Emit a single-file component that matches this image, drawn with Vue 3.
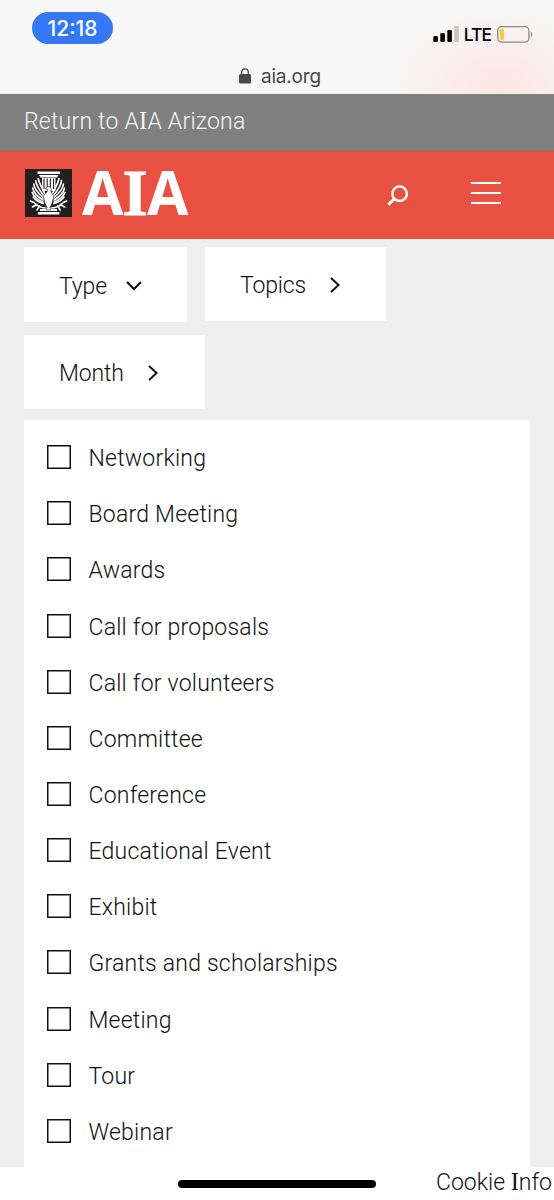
<script setup>
import { ref } from 'vue'

const filters = ref([
  { name: 'Type', open: true },
  { name: 'Topics', open: false },
  { name: 'Month', open: false },
])

const types = ref([
  { label: 'Networking', checked: false },
  { label: 'Board Meeting', checked: false },
  { label: 'Awards', checked: false },
  { label: 'Call for proposals', checked: false },
  { label: 'Call for volunteers', checked: false },
  { label: 'Committee', checked: false },
  { label: 'Conference', checked: false },
  { label: 'Educational Event', checked: false },
  { label: 'Exhibit', checked: false },
  { label: 'Grants and scholarships', checked: false },
  { label: 'Meeting', checked: false },
  { label: 'Tour', checked: false },
  { label: 'Webinar', checked: false },
])
</script>

<template>
  <div class="screen">
    <div class="browser">
      <div class="status">
        <div class="time">12:18</div>
        <div class="signal">
          <svg width="26" height="16" viewBox="0 0 26 16">
            <rect x="0.3" y="10" width="4.6" height="6" rx="1" />
            <rect x="7.3" y="7" width="4.6" height="9" rx="1" />
            <rect x="14.3" y="4" width="4.6" height="12" rx="1" />
            <rect x="21.2" y="0" width="4.6" height="16" rx="1" fill="#cbc3c3" />
          </svg>
          <span class="network">LTE</span>
          <svg width="36" height="17" viewBox="0 0 36 17">
            <rect x="0.7" y="0.7" width="31.2" height="15.4" rx="4" fill="none" stroke="#928587" stroke-width="1.3" />
            <rect x="2.8" y="2.8" width="4.2" height="11.2" rx="1.6" fill="#f3cb45" />
            <path d="M33.8 5.6 Q37 8.4 33.8 11.2 Z" fill="#928587" />
          </svg>
        </div>
      </div>
      <div class="address">
        <svg width="12" height="16" viewBox="0 0 12 16">
          <path d="M2.7 7 V4.5 C2.7 -0.3 9.3 -0.3 9.3 4.5 V7" fill="none" stroke="#484848" stroke-width="1.3" />
          <rect x="0" y="6" width="12" height="9.6" rx="1.6" fill="#484848" />
        </svg>
        <span>aia.org</span>
      </div>
    </div>

    <a class="return">Return to A<span class="slab">I</span>A Arizona</a>

    <header class="header">
      <svg class="emblem" width="47" height="48" viewBox="0 0 47 48">
        <rect width="47" height="48" fill="#231f20" />
        <g fill="#fff">
          <path d="M12.5 2.5 H35 V5 H12.5 Z M14 6 H33.5 L32 8.5 H15.5 Z" />
          <path d="M17 9 H30.5 V22 H17 Z" />
          <path d="M15 40 H32 V42 H15 Z M12.8 43 H34.4 V45.5 H12.8 Z" />
        </g>
        <path d="M19 9.5 V20 M22.2 9.5 V19 M25.4 9.5 V19 M28.5 9.5 V20" stroke="#231f20" stroke-width="1.1" />
        <g fill="none" stroke="#fff" stroke-width="1.65" stroke-linecap="round">
          <g id="wing">
            <path d="M13.2 9.5 C14 14 17 19 20 25" />
            <path d="M10.7 11.5 C11 17 15 22 19 27" />
            <path d="M8.8 15 C9 20 14 25 18.5 29" />
            <path d="M7.7 19 C8.5 24 13 28 18 31" />
            <path d="M7.2 23.5 C9 28 13 31 18 33" />
            <path d="M8.3 28 C11 32 14 33.5 18.5 34.5" />
            <path d="M5.5 32 L9 33.5 M7.5 38 L12 35.5 M12 41 L14.5 37 M10 34.5 C13 38 17 39 22 39" />
          </g>
          <use href="#wing" transform="translate(47.2 0) scale(-1 1)" />
        </g>
        <path d="M20.5 20 L23 17.3 Q26 17.5 26.2 20 L26 23 L29 27 L26.5 36 L25.5 41 H21.5 L20.5 36 L18.2 27 L22 23 L22.5 20.5 Z" fill="#fff" stroke="#231f20" stroke-width="0.6" />
        <path d="M20 35 L22.2 39 M27 35 L24.8 39" stroke="#231f20" stroke-width="0.9" />
      </svg>
      <div class="brand">A<span class="brand-i">I</span>A</div>
      <svg class="search" width="22" height="22" viewBox="0 0 22 22" fill="none" stroke="#fff">
        <circle cx="12.6" cy="8.7" r="7.3" stroke-width="2.4" />
        <path d="M7.2 14 L1.4 19.6" stroke-width="3" />
      </svg>
      <div class="menu">
        <span></span>
        <span></span>
        <span></span>
      </div>
    </header>

    <main class="content">
      <div class="filters">
        <button
          v-for="filter in filters"
          :key="filter.name"
          class="filter"
          :class="{ open: filter.open }"
          @click="filter.open = !filter.open"
        >
          <span class="filter-name">{{ filter.name }}</span>
          <svg v-if="filter.open" width="16" height="10" viewBox="0 0 16 10">
            <path d="M1 1 L8 8 L15 1" />
          </svg>
          <svg v-else width="10" height="16" viewBox="0 0 10 16">
            <path d="M1 1 L8.6 8 L1 15" />
          </svg>
        </button>
      </div>

      <div class="panel">
        <label v-for="type in types" :key="type.label" class="option">
          <input v-model="type.checked" type="checkbox" class="box" />
          <span class="option-label">{{ type.label }}</span>
        </label>
      </div>
    </main>

    <footer class="footer">
      <div class="home-bar"></div>
      <span class="cookie">Cookie <span class="slab">I</span>nfo</span>
    </footer>
  </div>
</template>

<style>
body {
  margin: 0;
  background: #fff;
}
</style>

<style scoped>
.screen {
  width: 554px;
  height: 1200px;
  overflow: hidden;
  display: flex;
  flex-direction: column;
  font-family: Roboto, 'Liberation Sans', sans-serif;
  font-weight: 300;
  font-size: 23px;
  letter-spacing: 0.22px;
  color: #111;
}
.browser {
  box-sizing: border-box;
  height: 94px;
  flex: none;
  padding-top: 12px;
  background: radial-gradient(ellipse 110px 90px at 500px 94px, #fde4e1, rgba(247, 247, 247, 0)), #f7f7f7;
  border-bottom: 1px solid #f1f1f1;
}
.status {
  display: flex;
  justify-content: space-between;
  padding: 0 21px 0 32px;
}
.time {
  width: 81px;
  height: 32px;
  border-radius: 16px;
  background: #3478f6;
  color: #fff;
  font-family: Inter, sans-serif;
  font-size: 21px;
  font-weight: 500;
  line-height: 33px;
  text-align: center;
  letter-spacing: 0;
}
.signal {
  display: flex;
  align-items: center;
  height: 16px;
  padding-top: 14px;
}
.network {
  margin: 0 6px 0 5px;
  font-family: Inter, sans-serif;
  font-size: 17.5px;
  font-weight: 500;
  letter-spacing: -1px;
  color: #000;
}
.address {
  display: flex;
  align-items: center;
  gap: 10px;
  height: 24px;
  padding: 20px 0 0 239px;
  font-family: Inter, sans-serif;
  font-size: 19px;
  font-weight: 400;
  letter-spacing: -0.2px;
  color: #484848;
}
.return {
  height: 57px;
  flex: none;
  box-sizing: border-box;
  padding: 1px 0 0 24px;
  background: #808080;
  color: #f4f4f4;
  line-height: 54px;
}
.slab {
  font-family: 'Liberation Serif', serif;
  font-size: 24.5px;
  font-weight: 400;
  line-height: 1;
}
.header {
  display: flex;
  height: 88px;
  flex: none;
  background: #e85141;
}
.emblem {
  margin: 17.5px 0 0 25px;
}
.brand {
  width: 106px;
  margin-left: 10px;
  color: #fff;
  font-family: 'Open Sans', sans-serif;
  font-size: 60px;
  font-weight: 700;
  line-height: 82px;
  letter-spacing: -0.9px;
  white-space: nowrap;
}
.brand-i {
  font-family: 'Liberation Serif', serif;
  font-size: 65px;
  line-height: 1;
  -webkit-text-stroke: 0.8px #fff;
}
.search {
  margin: 34px 0 0 199px;
}
.menu {
  display: flex;
  flex-direction: column;
  gap: 8px;
  margin: 31px 0 0 62px;
}
.menu span {
  width: 30px;
  height: 2px;
  background: #fff;
}
.content {
  height: 928px;
  flex: none;
  box-sizing: border-box;
  padding: 8px 24px 0;
  background: #eee;
}
.filters {
  display: flex;
  flex-wrap: wrap;
  align-items: flex-start;
  gap: 13px 18px;
}
.filter {
  display: flex;
  align-items: center;
  gap: 24px;
  box-sizing: border-box;
  height: 74px;
  width: 181px;
  padding: 2px 0 0 35px;
  border: 0;
  background: #fff;
  color: inherit;
  font: inherit;
  letter-spacing: -0.15px;
}
.filter.open {
  width: 163px;
  height: 75px;
  gap: 19px;
}
.filter-name {
  padding-top: 1px;
}
.filter path {
  fill: none;
  stroke: #111;
  stroke-width: 2;
}
.panel {
  height: 747px;
  box-sizing: border-box;
  margin-top: 11px;
  padding: 9px 23px 0;
  background: #fff;
}
.option {
  display: flex;
  align-items: center;
  gap: 17.5px;
  height: 56.17px;
}
.option-label {
  padding-top: 3px;
}
.box {
  appearance: none;
  width: 24px;
  height: 24px;
  margin: 0;
  box-shadow: inset 0 0 0 1.5px #111;
}
.footer {
  display: flex;
  flex: 1;
  padding-left: 178px;
}
.home-bar {
  width: 198px;
  height: 8px;
  flex: none;
  margin-top: 13px;
  border-radius: 4px;
  background: #000;
}
.cookie {
  margin-left: 60px;
  line-height: 31px;
  letter-spacing: 0;
  white-space: nowrap;
}
</style>
